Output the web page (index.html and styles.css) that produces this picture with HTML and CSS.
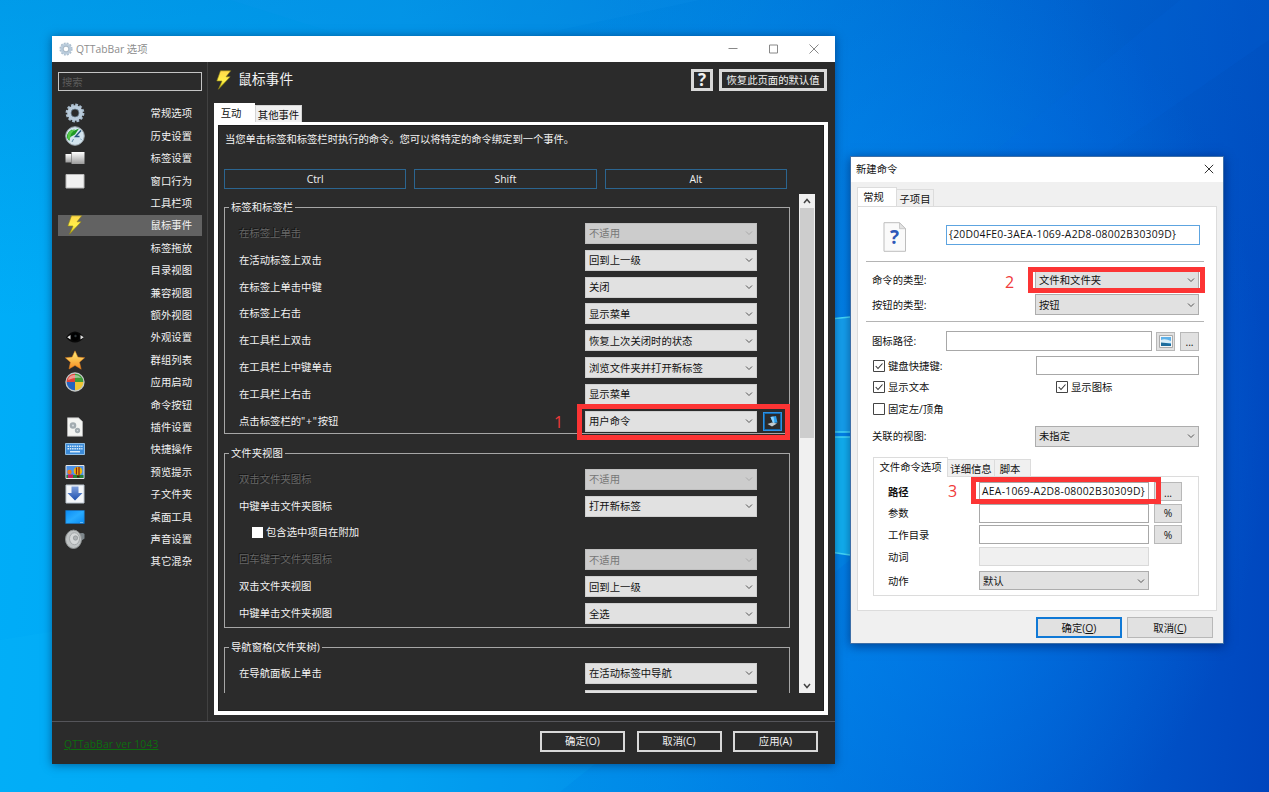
FILE: index.html
```html
<!DOCTYPE html>
<html lang="zh-CN">
<head>
<meta charset="utf-8">
<title>QTTabBar 选项</title>
<link rel="stylesheet" href="styles.css">
</head>
<body>
<svg class="defs" width="0" height="0">
  <defs>
    <symbol id="chev" viewBox="0 0 8 8"><path d="M1 2.500 4 5.500 7 2.500" fill="none" stroke="currentColor" stroke-width="1"/></symbol>
    <linearGradient id="gBolt" x1="0" y1="0" x2="0" y2="1"><stop offset="0" stop-color="#ffd84a"/><stop offset=".55" stop-color="#fff04a"/><stop offset="1" stop-color="#c9b800"/></linearGradient>
    <symbol id="bolt" viewBox="0 0 20 20"><path d="M6.500.8h10.200L12 6.800h4.200L4.400 19.300 8 11H2.800z" fill="url(#gBolt)" stroke="#8f8416" stroke-width=".6"/></symbol>
    <symbol id="gear" viewBox="0 0 20 20">
      <circle cx="10" cy="10" r="8.200" fill="none" stroke="#a9bccd" stroke-width="2.400" stroke-dasharray="2.700 1.594"/>
      <circle cx="10" cy="10" r="5.900" fill="none" stroke="#b9cbdb" stroke-width="3.900"/>
      <circle cx="10" cy="10" r="4" fill="none" stroke="#6f8598" stroke-width=".7"/>
    </symbol>
    <linearGradient id="gGrey" x1="0" y1="0" x2="0" y2="1"><stop offset="0" stop-color="#fff"/><stop offset="1" stop-color="#9a9a9a"/></linearGradient>
    <linearGradient id="gStar" x1="0" y1="0" x2="0" y2="1"><stop offset="0" stop-color="#fff07a"/><stop offset="1" stop-color="#f58a1f"/></linearGradient>
    <linearGradient id="gArrow" x1="0" y1="0" x2="0" y2="1"><stop offset="0" stop-color="#7fa0dc"/><stop offset="1" stop-color="#1d4fae"/></linearGradient>
    <linearGradient id="gDesk" x1="0" y1="0" x2="1" y2="1"><stop offset="0" stop-color="#0b8cf5"/><stop offset=".5" stop-color="#28abff"/><stop offset="1" stop-color="#0a8af0"/></linearGradient>
  </defs>
</svg>

<div class="desktop">
  <svg class="wallpaper" width="1269" height="792" viewBox="0 0 1269 792">
    <path d="M230 0 420 60 700 0z" fill="#1a9df0" opacity=".13"/>
    <path d="M1269 40 850 330v-60L1180 0h89z" fill="#006fe8" opacity=".12"/>
    <path d="M0 792 0 640 850 500v60L560 792z" fill="#12c0ff" opacity=".1"/>
    <path d="M830 319l20-2v115h-20z" fill="#16a4f2"/>
    <path d="M830 437h20v118l-20-3z" fill="#12b4f5"/>
    <path d="M830 319l20-2M830 437h20M830 432h20M830 552l20 3" stroke="#48e0ff" stroke-width="1.500"/>
  </svg>

  <main class="win options">
    <header class="titlebar">
      <svg width="14" height="14"><use href="#gear"/></svg>
      <span class="wtitle">QTTabBar 选项</span>
      <svg class="caps" width="94" height="12" viewBox="0 0 94 12" fill="none" stroke="#888" stroke-width="1"><path d="M1.500 5.500h9M42.500 2h8v8h-8zM82.500 1.500l9 9M91.500 1.500l-9 9"/></svg>
    </header>
    <div class="middle">
      <nav class="side">
        <div class="search">搜索</div>
        <ul>
          <li><svg width="20" height="20"><use href="#gear"/></svg>常规选项</li>
          <li><svg width="20" height="20" viewBox="0 0 20 20"><circle cx="10" cy="10" r="9.300" fill="#d3e4ee" stroke="#9aa4aa"/><path d="M14 2.500 7 5.500V3.600Q2 6 1.800 11.500l2.500 3.500 1-4L10 8.500z" fill="#1f9a24"/><path d="M2.500 12Q2 6 7 4l3-.8L6 8l-1.500 6z" fill="#55c84a"/><path d="M16 4.500 10.500 10.500h4" fill="none" stroke="#26557c" stroke-width="1.400"/><path d="M7 16l1.500-3M15.500 13l1 .5" stroke="#5d88a4"/></svg>历史设置</li>
          <li><svg width="20" height="20" viewBox="0 0 20 20"><path d="M.5 6h7v8.500h-7z" fill="url(#gGrey)"/><path d="M6.500 4h13v12h-13z" fill="url(#gGrey)"/><path d="M6.500 5v10" stroke="#777" stroke-width=".7"/></svg>标签设置</li>
          <li><svg width="20" height="20" viewBox="0 0 20 20"><path d="M1 3.500h18v13.500H1z" fill="#f1f1f1" stroke="#bbb"/></svg>窗口行为</li>
          <li>工具栏项</li>
          <li class="on"><svg width="20" height="20"><use href="#bolt"/></svg>鼠标事件</li>
          <li>标签拖放</li>
          <li>目录视图</li>
          <li>兼容视图</li>
          <li>额外视图</li>
          <li><svg width="20" height="20" viewBox="0 0 20 20"><path d="M1 10.500Q5 4.500 10 4.500t9 6Q15 15.500 10 15.500T1 10.500z" fill="#080808"/><path d="M2.200 10.300 5.500 8v4.500zM18.800 10.300 15.500 8v4.500z" fill="#e0e0e0"/><circle cx="10" cy="9.800" r="4" fill="#000"/><circle cx="10.500" cy="9" r="1.200" fill="#2b3438"/></svg>外观设置</li>
          <li><svg width="20" height="20" viewBox="0 0 20 20"><path d="m10 .8 2.900 6.300 6.800.6-5.200 4.500 1.700 7L10 15.500 4 19l1.400-6.800L.3 7.700l6.800-.6z" fill="url(#gStar)" stroke="#d9761a" stroke-width=".5"/></svg>群组列表</li>
          <li><svg width="20" height="20" viewBox="0 0 20 20"><path d="M10 10V1A9 9 0 0 0 1 10z" fill="#df4338"/><path d="M10 10h9A9 9 0 0 0 10 1z" fill="#3f9b37"/><path d="M10 10H1a9 9 0 0 0 9 9z" fill="#2463bd"/><path d="M10 10v9a9 9 0 0 0 9-9z" fill="#efc534"/><path d="M3 8a7 6 0 0 1 13-2Q10 5 3 8" fill="#fff" opacity=".45"/><circle cx="10" cy="10" r="9" fill="none" stroke="#c5c9c8" stroke-width="1.300"/></svg>应用启动</li>
          <li>命令按钮</li>
          <li><svg width="20" height="20" viewBox="0 0 20 20"><path d="M2.500.8h11l4 3.800v14.600h-15z" fill="#f3f4f2" stroke="#b9b9b9" stroke-width=".7"/><circle cx="8" cy="8.500" r="2.200" fill="#d4dadd" stroke="#a2abb0" stroke-width="2.200"/><circle cx="12.500" cy="13.500" r="1.700" fill="#d4dadd" stroke="#a2abb0" stroke-width="1.900"/></svg>插件设置</li>
          <li><svg width="20" height="20" viewBox="0 0 20 20"><path d="M.5 4.500h19v11H.5z" fill="#3c8bd8" stroke="#98c7ee" stroke-width=".9"/><path d="M2.500 7.200h15M2.500 9.700h15" stroke="#d8ebfa" stroke-width="1.500" stroke-dasharray="1.500 .8"/><path d="M5 12.700h10" stroke="#d8ebfa" stroke-width="1.500"/></svg>快捷操作</li>
          <li><svg width="20" height="20" viewBox="0 0 20 20"><path d="M1 3.500h18v13H1z" fill="#4f93e8" stroke="#e6e6e6"/><path d="M1.500 13h17v3h-17z" fill="#278038"/><circle cx="4.500" cy="10" r="2.200" fill="#f27b1b"/><path d="M3 12.500h5V16H3z" fill="#c91e5e"/><circle cx="13" cy="9" r="4.300" fill="#efb50f"/><path d="M11.500 5.500v7M14 5v8" stroke="#8b2313" stroke-width="1.300"/><path d="M12 13.500h2.500v2H12z" fill="#4e1a10"/></svg>预览提示</li>
          <li><svg width="20" height="20" viewBox="0 0 20 20"><path d="M1 1h18v18H1z" fill="#f3f6f9" stroke="#bcc6d0"/><path d="M6.500 2.500h7v6.500h4L10 16.500 2.500 9h4z" fill="url(#gArrow)"/></svg>子文件夹</li>
          <li><svg width="20" height="20" viewBox="0 0 20 20"><path d="M.7 3.500h18.600v13H.7z" fill="url(#gDesk)" stroke="#1673c4" stroke-width=".6"/><path d="M15 15.500h3" stroke="#7fc4fa" stroke-width=".8"/></svg>桌面工具</li>
          <li><svg width="20" height="20" viewBox="0 0 20 20"><path d="M11 4.500l7-.5 1.500 1v4.500L12 15z" fill="#7d868b"/><ellipse cx="8.500" cy="10.300" rx="8" ry="9.200" fill="#bfc3c4" stroke="#8b8f90"/><ellipse cx="9.500" cy="9.700" rx="5" ry="6" fill="#d5d8d9" stroke="#a5a9ab"/><circle cx="10.500" cy="9" r="2.200" fill="#adb1b4" stroke="#85898b" stroke-width=".6"/></svg>声音设置</li>
          <li>其它混杂</li>
        </ul>
      </nav>
      <section class="content">
        <div class="head">
          <svg width="20" height="22"><use href="#bolt"/></svg>
          <h1>鼠标事件</h1>
          <span class="dbtn help">?</span>
          <span class="dbtn restore">恢复此页面的默认值</span>
        </div>
        <div class="tabs"><span class="tab cur">互动</span><span class="tab">其他事件</span></div>
        <div class="panel">
          <p>当您单击标签和标签栏时执行的命令。您可以将特定的命令绑定到一个事件。</p>
          <div class="mods"><span>Ctrl</span><span>Shift</span><span>Alt</span></div>
          <div class="scroller">
            <div class="groups">
              <fieldset class="g1"><legend>标签和标签栏</legend>
                <div class="row off"><label>在标签上单击</label><span class="sel">不适用<svg><use href="#chev"/></svg></span></div>
                <div class="row"><label>在活动标签上双击</label><span class="sel">回到上一级<svg><use href="#chev"/></svg></span></div>
                <div class="row"><label>在标签上单击中键</label><span class="sel">关闭<svg><use href="#chev"/></svg></span></div>
                <div class="row"><label>在标签上右击</label><span class="sel">显示菜单<svg><use href="#chev"/></svg></span></div>
                <div class="row"><label>在工具栏上双击</label><span class="sel">恢复上次关闭时的状态<svg><use href="#chev"/></svg></span></div>
                <div class="row"><label>在工具栏上中键单击</label><span class="sel">浏览文件夹并打开新标签<svg><use href="#chev"/></svg></span></div>
                <div class="row"><label>在工具栏上右击</label><span class="sel">显示菜单<svg><use href="#chev"/></svg></span></div>
                <div class="row"><label>点击标签栏的<span class="plus">"+"</span>按钮</label><span class="sel">用户命令<svg><use href="#chev"/></svg></span>
                  <span class="cmd"><svg width="13" height="13" viewBox="0 0 13 13"><path d="M4.500 2l5.500-1 1.500 6.500L7 8z" fill="#2da0ee"/><path d="M4.500 2 7.500 1.500 8.500 7.800 7 8z" fill="#8bd1fa"/><path d="M1.500 9 6 7.500l5 1-5 3z" fill="#c3cbd0"/></svg></span>
                </div>
              </fieldset>
              <fieldset class="g2"><legend>文件夹视图</legend>
                <div class="row off"><label>双击文件夹图标</label><span class="sel">不适用<svg><use href="#chev"/></svg></span></div>
                <div class="row"><label>中键单击文件夹图标</label><span class="sel">打开新标签<svg><use href="#chev"/></svg></span></div>
                <div class="row chk"><i></i>包含选中项目在附加</div>
                <div class="row off"><label>回车键于文件夹图标</label><span class="sel">不适用<svg><use href="#chev"/></svg></span></div>
                <div class="row"><label>双击文件夹视图</label><span class="sel">回到上一级<svg><use href="#chev"/></svg></span></div>
                <div class="row"><label>中键单击文件夹视图</label><span class="sel">全选<svg><use href="#chev"/></svg></span></div>
              </fieldset>
              <fieldset class="g3"><legend>导航窗格(文件夹树)</legend>
                <div class="row"><label>在导航面板上单击</label><span class="sel">在活动标签中导航<svg><use href="#chev"/></svg></span></div>
                <div class="row"><label></label><span class="sel"></span></div>
              </fieldset>
            </div>
            <div class="bar">
              <svg width="10" height="14" viewBox="0 0 10 14"><path d="M2 9l3-3.500L8 9" fill="none" stroke="#444" stroke-width="1.500"/></svg>
              <div class="thumb"></div>
              <svg width="10" height="14" viewBox="0 0 10 14"><path d="M2 5l3 3.500L8 5" fill="none" stroke="#444" stroke-width="1.500"/></svg>
            </div>
          </div>
        </div>
      </section>
    </div>
    <footer class="foot">
      <a>QTTabBar ver 1043</a>
      <span class="dbtn">确定(O)</span><span class="dbtn">取消(C)</span><span class="dbtn">应用(A)</span>
    </footer>
  </main>

  <section class="win dialog">
    <header class="dtitle"><span>新建命令</span><svg width="10" height="10" viewBox="0 0 10 10"><path d="M.8.800l8.400 8.400M9.200.800.8 9.200" stroke="#333" stroke-width="1"/></svg></header>
    <div class="ltabs"><span class="cur">常规</span><span>子项目</span></div>
    <div class="page">
      <div class="line name">
        <svg width="24" height="30" viewBox="0 0 24 30"><path d="M1 .7h15.500l6 6v22.600H1z" fill="#fafafa" stroke="#bdbdbd"/><path d="M16.500.7v6h6z" fill="#e2e2e2" stroke="#bbb" stroke-width=".7"/><text x="11.500" y="22" text-anchor="middle" class="qm">?</text></svg>
        <span class="inp focus">{20D04FE0-3AEA-1069-A2D8-08002B30309D}</span>
      </div>
      <hr>
      <div class="line r1"><label>命令的类型:</label><span class="lsel">文件和文件夹<svg><use href="#chev"/></svg></span></div>
      <div class="line r2"><label>按钮的类型:</label><span class="lsel">按钮<svg><use href="#chev"/></svg></span></div>
      <hr>
      <div class="line r3"><label>图标路径:</label><span class="inp"></span>
        <span class="lbtn"><svg width="14" height="13" viewBox="0 0 14 13"><path d="M.5.500h13v12H.5z" fill="#f6f6f6" stroke="#aaa"/><path d="M2 2h10v9H2z" fill="#5fb1e8"/><path d="M2 5q4-2 10 1v2H2z" fill="#d7edf8"/><path d="M2 7.500l5 .5 5 1v2H2z" fill="#1d6c9c"/></svg></span>
        <span class="lbtn dots">...</span></div>
      <div class="line r4"><svg class="cb" width="12" height="12" viewBox="0 0 12 12"><path d="M.5.500h11v11H.5z" class="box"/><path d="M2.700 6l2.300 2.500L9.500 3.500" class="tick"/></svg><label>键盘快捷键:</label><span class="inp"></span></div>
      <div class="line r5"><svg class="cb" width="12" height="12" viewBox="0 0 12 12"><path d="M.5.500h11v11H.5z" class="box"/><path d="M2.700 6l2.300 2.500L9.500 3.500" class="tick"/></svg><label>显示文本</label><svg class="cb" width="12" height="12" viewBox="0 0 12 12"><path d="M.5.500h11v11H.5z" class="box"/><path d="M2.700 6l2.300 2.500L9.500 3.500" class="tick"/></svg><label>显示图标</label></div>
      <div class="line r6"><svg class="cb" width="12" height="12" viewBox="0 0 12 12"><path d="M.5.500h11v11H.5z" class="box"/></svg><label>固定左/顶角</label></div>
      <div class="line r7"><label>关联的视图:</label><span class="lsel">未指定<svg><use href="#chev"/></svg></span></div>
      <div class="ltabs inner"><span class="cur">文件命令选项</span><span>详细信息</span><span>脚本</span></div>
      <div class="sub">
        <label class="b">路径</label><span class="inp">AEA-1069-A2D8-08002B30309D}</span><span class="lbtn dots">...</span>
        <label>参数</label><span class="inp"></span><span class="lbtn">%</span>
        <label>工作目录</label><span class="inp"></span><span class="lbtn">%</span>
        <label>动词</label><span class="inp dis"></span><i></i>
        <label>动作</label><span class="lsel">默认<svg><use href="#chev"/></svg></span>
      </div>
    </div>
    <div class="dfoot"><span class="lbtn def"><span>确定(<u>O</u>)</span></span><span class="lbtn"><span>取消(<u>C</u>)</span></span></div>
  </section>

  <div class="mark m1"></div><b class="num n1">1</b>
  <div class="mark m2"></div><b class="num n2">2</b>
  <div class="mark m3"></div><b class="num n3">3</b>
</div>
</body>
</html>
```
FILE: styles.css
```css
* { box-sizing: border-box; }
body {
  margin: 0;
  font: 10.35px/14px "Open Sans", "Noto Sans", "Noto Sans CJK SC", sans-serif;
  color: #111;
}
svg { display: block; flex: none; }
.defs { position: absolute; }

.desktop {
  position: relative;
  width: 1269px;
  height: 792px;
  overflow: hidden;
  background:
    radial-gradient(ellipse 420px 520px at 850px 420px, rgba(0, 140, 245, .7), rgba(0, 130, 240, 0) 100%),
    linear-gradient(180deg, rgba(0, 100, 190, .25), rgba(0, 190, 255, 0) 40%),
    linear-gradient(95deg, #00aef8 0%, #00a2f2 30%, #0088e6 55%, #0064d6 78%, #0045bd 100%);
}
.wallpaper { position: absolute; left: 0; top: 0; }
.win { position: absolute; display: flex; flex-direction: column; }

/* Options window */
.options {
  left: 52px;
  top: 36px;
  width: 783px;
  height: 728px;
  background: #2b2b2b;
  color: #f2f2f2;
  box-shadow: 0 1px 9px rgba(0, 20, 60, .5);
}
.titlebar {
  height: 26px;
  padding: 0 14px 0 7px;
  background: #fff;
  color: #8d8d8d;
  display: flex;
  align-items: center;
}
.wtitle { margin-left: 3px; flex: 1; }
.middle { display: flex; height: 660px; border-bottom: 1px solid #55555a; }

.side { width: 156px; padding: 10px 5px 0 6px; border-right: 1px solid #414141; }
.search {
  width: 144px;
  height: 19px;
  padding: 2px 3px;
  border: 1px solid #c4c4c4;
  color: #5c5c5c;
}
.side ul { list-style: none; margin: 12.3px 0 0; padding: 0; }
.side li {
  height: 20.4px;
  margin-bottom: 2px;
  padding: 0 10px 0 7px;
  display: flex;
  align-items: center;
  justify-content: flex-end;
}
.side li svg { margin-right: auto; }
.side li.on { background: #626262; }

.content { flex: 1; padding: 7px 7px 0 6px; }
.head { display: flex; align-items: center; height: 22px; }
.head h1 { margin: 0 auto 2px 4px; font-size: 13.8px; line-height: 18px; font-weight: 400; }
.dbtn {
  border: 2px solid #d9d9d9;
  display: flex;
  align-items: center;
  justify-content: center;
}
.help { width: 22px; height: 22px; border-width: 3px; font-size: 17px; font-weight: 700; margin-right: 6px; }
.restore { width: 108px; height: 22px; border-width: 3px; margin-right: 1px; }

.tabs { display: flex; align-items: flex-end; height: 19px; margin-top: 12px; color: #111; }
.tab { width: 47px; height: 17px; background: #f0f0f0; border: 1px solid #d4d4d4; border-bottom: 0; text-align: center; line-height: 18px; }
.tab.cur { width: 41px; height: 19px; background: #fff; border: 0; line-height: 20px; padding-right: 7px; }
.panel {
  width: 614px;
  height: 593px;
  border: 4px solid #fff;
  border-top-width: 3px;
  padding: 7px 6px 0;
  box-shadow: inset 0 0 0 1px #1f1f1f;
}
.panel p { margin: 0 0 0 1px; white-space: nowrap; letter-spacing: -.08px; }
.mods { display: flex; gap: 8px; width: 563px; margin-top: 23px; }
.mods span { flex: 1; height: 20px; border: 1px solid #2b6590; text-align: center; line-height: 19px; }
.scroller { display: flex; justify-content: space-between; margin-top: 5px; width: 591px; height: 499px; overflow: hidden; }
.groups { width: 566px; padding-top: 6px; }
fieldset {
  min-width: 0;
  margin: 0 0 12px;
  padding: 6px 0 0 14px;
  border: 1px solid #a6a6a6;
}
legend { padding: 0 2px; margin-left: -10px; line-height: 14px; }
.g1 { height: 234px; }
.g2 { height: 182px; }
.g3 { height: 120px; }
.row { height: 26.85px; display: flex; align-items: center; }
.row label { width: 346px; padding-bottom: 1px; }
.plus { letter-spacing: .8px; }
.sel {
  width: 172px;
  height: 21px;
  padding: 0 3px;
  background: #e1e1e1;
  border: 1px solid #cfcfcf;
  color: #111;
  display: flex;
  align-items: center;
}
.sel svg, .lsel svg { width: 8px; height: 8px; margin-left: auto; color: #555; }
.off label { color: #656565; text-shadow: -1px -1px 0 #141414; }
.off .sel { background: #ccc; border-color: #bfbfbf; color: #777; }
.off .sel svg { color: #aaa; }
.chk { padding: 0 0 3px 13px; }
.chk i { width: 11px; height: 11px; margin: 2px 3px 0 0; background: #fff; }
.cmd {
  width: 19px;
  height: 19px;
  margin-left: 6px;
  border: 1px solid #2c91e4;
  outline: 1px solid #1569ad;
  outline-offset: -2px;
  display: flex;
  align-items: center;
  justify-content: center;
}
.bar { width: 16px; background: #f0f0f0; display: flex; flex-direction: column; align-items: center; }
.thumb { width: 14px; height: 230px; margin-bottom: auto; background: #cdcdcd; }

.foot { height: 42px; display: flex; align-items: center; gap: 11.5px; padding: 0 17px 4px 12px; }
.foot a { margin: 5px auto 0 0; color: #0b6e0e; text-decoration: underline; letter-spacing: .12px; }
.foot .dbtn { width: 85px; height: 21px; }

/* Command dialog */
.dialog {
  left: 850px;
  top: 156px;
  width: 374px;
  height: 488px;
  background: #f0f0f0;
  border: 1px solid #3d6fa8;
  padding: 0 6px;
  box-shadow: 0 2px 10px rgba(0, 10, 60, .5);
}
.dtitle {
  height: 25px;
  margin: 0 -6px;
  padding: 0 9px 2px 5px;
  background: #fff;
  display: flex;
  align-items: center;
  justify-content: space-between;
}
.ltabs { display: flex; align-items: flex-end; height: 20px; margin-top: 4px; }
.ltabs span {
  height: 17px;
  width: 37px;
  border: 1px solid #dcdcdc;
  border-bottom: 0;
  border-left: 0;
  background: #f0f0f0;
  text-align: center;
  line-height: 18px;
}
.ltabs .cur { width: 40px; height: 20px; background: #fff; border-left: 1px solid #dcdcdc; margin-bottom: -1px; padding-right: 7px; line-height: 19px; }
.page { height: 405px; background: #fff; border: 1px solid #dcdcdc; padding: 15px 12px 0 8px; }
.page hr { height: 1px; margin: 0; border: 0; background: #b4b4b4; }
.line { display: flex; align-items: center; padding: 0 5px 0 6px; }
.name { height: 39px; padding: 0 4px 9px 17px; }
.inp {
  height: 20px;
  border: 1px solid #a8a8a8;
  background: #fff;
  padding: 0 2px;
  line-height: 17px;
  letter-spacing: .27px;
  white-space: nowrap;
  overflow: hidden;
}
.focus { width: 254px; margin: -5px 0 0 auto; border-color: #5da4e0; }
.lsel {
  width: 164px;
  height: 21px;
  margin-left: auto;
  padding: 0 3px;
  background: #e1e1e1;
  border: 1px solid #adadad;
  display: flex;
  align-items: center;
}
.lbtn {
  background: #e1e1e1;
  border: 1px solid #b8b8b8;
  display: flex;
  align-items: center;
  justify-content: center;
  height: 19px;
}
.dots { padding-top: 2px; }
.r1 { height: 25px; margin-top: 5px; }
.r2 { height: 25px; margin-bottom: 4px; }
.r3 { height: 26px; margin-top: 6px; }
.r3 .inp { width: 206px; margin-left: auto; }
.r3 .lbtn { width: 19px; margin-left: 4px; }
.r3 .lbtn + .lbtn { margin-left: 5px; }
.r4 { height: 23px; }
.r4 .inp { width: 163px; height: 19px; margin-left: auto; }
.cb { margin: 0 3px 0 1px; }
.r5 .cb ~ .cb { margin-left: 0; }
.box { fill: #fff; stroke: #444; }
.tick { fill: none; stroke: #333; stroke-width: 1.1; }
.r5 { height: 20px; }
.r5 label:first-of-type { width: 168px; }
.r6 { height: 23px; }
.r7 { height: 28px; margin-top: 2px; }
.inner { margin: 6px 0 0 7px; }
.inner .cur { width: 75px; padding: 0; }
.inner span:nth-child(2) { width: 47px; }
.inner span:nth-child(3) { width: 36px; padding-right: 5px; }
.sub {
  width: 326px;
  height: 120px;
  margin-left: 7px;
  padding: 4px 16px 0 14px;
  border: 1px solid #dcdcdc;
  display: grid;
  grid-template: repeat(4, 21.6px) 27px / 86px 170px 28px;
  column-gap: 5px;
  align-items: center;
}
.sub .inp, .sub .lbtn { height: 19px; }
.sub .dis { background: #f0f0f0; border-color: #d9d9d9; }
.sub .lsel { width: 170px; height: 19px; margin: 0; }
.b { font-weight: 700; }
.dfoot { display: flex; justify-content: flex-end; gap: 5px; padding: 6px 4px 0 0; }
.dfoot .lbtn { width: 86px; height: 21px; }
.dfoot .def { border: 2px solid #1079d6; }

/* Numbered callouts */
.mark { position: absolute; border: 5px solid #fc3434; }
.m1 { left: 577px; top: 404px; width: 213px; height: 36px; }
.m2 { left: 1028px; top: 267px; width: 177px; height: 26px; }
.m3 { left: 971px; top: 477px; width: 190px; height: 27px; }
.num { position: absolute; color: #f03a3a; font: 400 16px/18px "Open Sans", "Noto Sans", sans-serif; }
.n1 { left: 554px; top: 413px; }
.n2 { left: 1005px; top: 273px; }
.n3 { left: 948px; top: 482px; }
.qm { font: 700 19px "Open Sans", sans-serif; fill: #2e58b8; }
```
